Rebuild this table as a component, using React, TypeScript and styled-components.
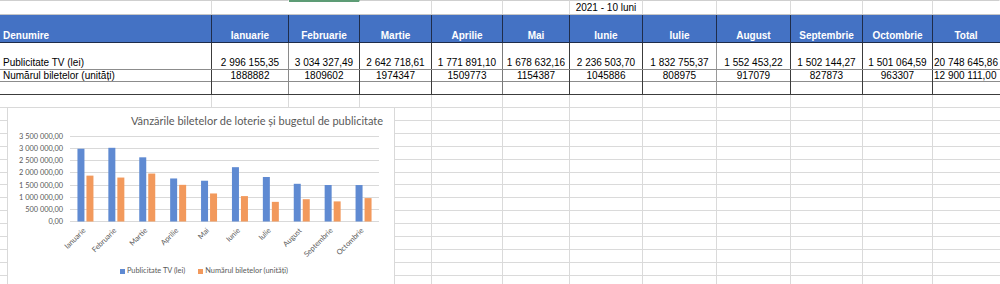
import React from "react";
import styled, { createGlobalStyle } from "styled-components";

const GlobalStyle = createGlobalStyle`
  html, body { margin: 0; padding: 0; background: #ffffff; }
  body { font-family: "Liberation Sans", Arial, sans-serif; }
`;

const COLS = "212px 77px 71px 72px 71px 67px 73px 74px 74px 72px 70px 1fr";

const months = [
  "Ianuarie", "Februarie", "Martie", "Aprilie", "Mai", "Iunie",
  "Iulie", "August", "Septembrie", "Octombrie",
];
const tvText = [
  "2 996 155,35", "3 034 327,49", "2 642 718,61", "1 771 891,10", "1 678 632,16",
  "2 236 503,70", "1 832 755,37", "1 552 453,22", "1 502 144,27", "1 501 064,59",
];
const ticketsText = [
  "1888882", "1809602", "1974347", "1509773", "1154387",
  "1045886", "808975", "917079", "827873", "963307",
];
const tv = [2996155.35, 3034327.49, 2642718.61, 1771891.1, 1678632.16, 2236503.7, 1832755.37, 1552453.22, 1502144.27, 1501064.59];
const tickets = [1888882, 1809602, 1974347, 1509773, 1154387, 1045886, 808975, 917079, 827873, 963307];

const Sheet = styled.div`
  position: relative;
  width: 1000px;
  height: 284px;
  overflow: hidden;
  background: #ffffff;
  font-family: "Liberation Sans", Arial, sans-serif;
  font-size: 10px;
  color: #000000;
`;

const Row = styled.div<{ $h: number; $line: string; $bg?: string }>`
  display: grid;
  grid-template-columns: ${COLS};
  height: ${(p) => p.$h}px;
  box-sizing: border-box;
  border-bottom: 1px solid ${(p) => p.$line};
  background: ${(p) => p.$bg ?? "transparent"};
`;

const Cell = styled.div<{ $rule?: string; $align?: "left" | "center"; $top?: string; $topW?: number }>`
  box-sizing: border-box;
  min-width: 0;
  border-right: 1px solid ${(p) => p.$rule ?? "transparent"};
  border-top: ${(p) => (p.$top ? `${p.$topW ?? 1}px solid ${p.$top}` : "none")};
  display: flex;
  align-items: flex-end;
  justify-content: ${(p) => (p.$align === "left" ? "flex-start" : "center")};
  padding: 0 ${(p) => (p.$align === "left" ? "3px" : "0")};
  white-space: nowrap;
  line-height: 12px;
`;

const HeadCell = styled(Cell)`
  color: #ffffff;
  font-weight: bold;
`;

const TotalCell = styled(Cell)`
  padding-left: 1px;
  overflow: visible;
`;

const ChartFrame = styled.div`
  position: absolute;
  left: 7px;
  top: 107px;
  width: 388px;
  height: 200px;
  box-sizing: border-box;
  border: 1px solid #d9d9d9;
  background: #ffffff;
  display: flex;
  flex-direction: column;
  font-family: Lato, "Liberation Sans", sans-serif;
  color: #595959;
`;

const ChartTitle = styled.div`
  padding: 3px 0 0 112px;
  line-height: 20px;
  height: 20px;
  font-size: 11px;
  text-align: center;
  white-space: nowrap;
`;

const Plot = styled.svg`
  display: block;
  width: 386px;
  height: 127px;
  flex: none;
`;

const Legend = styled.div`
  display: flex;
  justify-content: center;
  gap: 13px;
  padding-top: 7px;
  line-height: 12px;
  font-size: 7.4px;
  padding-left: 6px;
`;

const LegendItem = styled.div`
  display: flex;
  align-items: center;
  gap: 2px;
  white-space: nowrap;
`;

const Swatch = styled.span<{ $c: string }>`
  width: 5px;
  height: 5px;
  background: ${(p) => p.$c};
  display: inline-block;
`;

const BLUE = "#5f8ad2";
const ORANGE = "#f2995c";
const GRID = "#d9d9d9";

const DARK = "#3c3c3c";
const NAVY = "#1e2c4a";
const LIGHT = "#dadada";

const gridHeights = [13, 13, 13, 13, 13, 13, 12, 13, 13, 13, 13, 13, 13, 13, 13];

function ChartPlot() {
  const axisY = 90;
  const max = 3500000;
  const span = 85;
  const x0 = 62;
  const x1 = 371;
  const cw = (x1 - x0) / 10;
  const ticks = [0, 1, 2, 3, 4, 5, 6, 7];
  const fmt = (v: number) =>
    v === 0 ? "0,00" : `${v.toLocaleString("en-US").replace(/,/g, " ")},00`;
  return (
    <Plot viewBox="0 0 386 127">
      {ticks.map((i) => {
        const y = Math.round(axisY - (i * span) / 7) + 0.5;
        return (
          <g key={i}>
            <line x1={x0} x2={x1} y1={y} y2={y} stroke={GRID} strokeWidth={1} />
            <text x={55} y={y + 2.6} textAnchor="end" fontSize={7.4} fill="#595959" fontFamily="Lato, 'Liberation Sans', sans-serif">
              {fmt(i * 500000)}
            </text>
          </g>
        );
      })}
      {months.map((m, i) => {
        const cx = x0 + cw * (i + 0.5);
        const hb = (tv[i] / max) * span;
        const ho = (tickets[i] / max) * span;
        return (
          <g key={m}>
            <rect x={cx - 8} y={axisY + 0.5 - hb} width={7} height={hb} fill={BLUE} />
            <rect x={cx + 1} y={axisY + 0.5 - ho} width={7} height={ho} fill={ORANGE} />
            <text
              x={cx + 0.5}
              y={100}
              textAnchor="end"
              fontSize={7.4}
              fill="#595959"
              fontFamily="Lato, 'Liberation Sans', sans-serif"
              transform={`rotate(-45 ${cx + 0.5} 100)`}
            >
              {m}
            </text>
          </g>
        );
      })}
    </Plot>
  );
}

export default function App() {
  const bodyRules = [DARK, "#8a8a8a", DARK, DARK, "#7a7a7a", DARK, DARK, "#9a9a9a", DARK, DARK, DARK, "transparent"];
  return (
    <>
      <GlobalStyle />
      <Sheet>
        <Row $h={15} $line="#c6c6c6">
          {Array.from({ length: 12 }).map((_, i) => (
            <Cell
              key={i}
              $rule={i === 1 || i === 2 || i === 11 ? "transparent" : LIGHT}
              $top={i === 2 ? "#5d9c75" : "#cfcfcf"}
              $topW={i === 2 ? 2 : 1}
            >
              {i === 6 ? "2021 - 10  luni" : null}
            </Cell>
          ))}
        </Row>
        <Row $h={28} $line={NAVY} $bg="#4472c4">
          <HeadCell $rule={NAVY} $align="left">Denumire</HeadCell>
          {months.map((m) => (
            <HeadCell key={m} $rule={NAVY}>{m}</HeadCell>
          ))}
          <HeadCell>Total</HeadCell>
        </Row>
        <Row $h={27} $line="#8c8c8c">
          <Cell $rule={DARK} $align="left">Publicitate TV (lei)</Cell>
          {tvText.map((t, i) => (
            <Cell key={i} $rule={bodyRules[i + 1]}>{t}</Cell>
          ))}
          <TotalCell $align="left">20 748 645,86</TotalCell>
        </Row>
        <Row $h={12} $line="#8c8c8c">
          <Cell $rule={DARK} $align="left">Numărul biletelor (unități)</Cell>
          {ticketsText.map((t, i) => (
            <Cell key={i} $rule={bodyRules[i + 1]}>{t}</Cell>
          ))}
          <TotalCell $align="left">12 900 111,00</TotalCell>
        </Row>
        <Row $h={13} $line={DARK}>
          {Array.from({ length: 12 }).map((_, i) => (
            <Cell key={i} $rule={i === 0 ? DARK : bodyRules[i]} />
          ))}
        </Row>
        {gridHeights.map((h, r) => (
          <Row key={r} $h={h} $line={LIGHT}>
            {Array.from({ length: 12 }).map((_, i) => (
              <Cell key={i} $rule={i === 11 ? "transparent" : LIGHT} />
            ))}
          </Row>
        ))}
        <ChartFrame>
          <ChartTitle>Vânzările biletelor de loterie și bugetul de publicitate</ChartTitle>
          <ChartPlot />
          <Legend>
            <LegendItem>
              <Swatch $c={BLUE} />
              Publicitate TV (lei)
            </LegendItem>
            <LegendItem>
              <Swatch $c={ORANGE} />
              Numărul biletelor (unități)
            </LegendItem>
          </Legend>
        </ChartFrame>
      </Sheet>
    </>
  );
}
